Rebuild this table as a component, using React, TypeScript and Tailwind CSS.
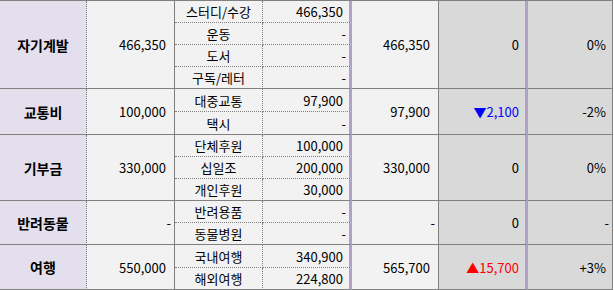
import React from 'react';

type Sub = { name: string; amount: string };
type Group = {
  category: string;
  budget: string;
  items: Sub[];
  spent: string;
  diff: string;
  diffType?: 'up' | 'down';
  rate: string;
};

const groups: Group[] = [
  {
    category: '자기계발',
    budget: '466,350',
    items: [
      { name: '스터디/수강', amount: '466,350' },
      { name: '운동', amount: '-' },
      { name: '도서', amount: '-' },
      { name: '구독/레터', amount: '-' },
    ],
    spent: '466,350',
    diff: '0',
    rate: '0%',
  },
  {
    category: '교통비',
    budget: '100,000',
    items: [
      { name: '대중교통', amount: '97,900' },
      { name: '택시', amount: '-' },
    ],
    spent: '97,900',
    diff: '2,100',
    diffType: 'down',
    rate: '-2%',
  },
  {
    category: '기부금',
    budget: '330,000',
    items: [
      { name: '단체후원', amount: '100,000' },
      { name: '십일조', amount: '200,000' },
      { name: '개인후원', amount: '30,000' },
    ],
    spent: '330,000',
    diff: '0',
    rate: '0%',
  },
  {
    category: '반려동물',
    budget: '-',
    items: [
      { name: '반려용품', amount: '-' },
      { name: '동물병원', amount: '-' },
    ],
    spent: '-',
    diff: '0',
    rate: '-',
  },
  {
    category: '여행',
    budget: '550,000',
    items: [
      { name: '국내여행', amount: '340,900' },
      { name: '해외여행', amount: '224,800' },
    ],
    spent: '565,700',
    diff: '15,700',
    diffType: 'up',
    rate: '+3%',
  },
];

// row spans for each group, used to place spanning cells
const spanClass: Record<number, string> = {
  2: 'row-span-2',
  3: 'row-span-3',
  4: 'row-span-4',
};

function Num({ value, pad }: { value: string; pad: 'wide' | 'narrow' }) {
  const isDash = value === '-';
  const pr = isDash ? 'pr-[3px]' : pad === 'wide' ? 'pr-[8px]' : 'pr-[6px]';
  return <span className={pr}>{value}</span>;
}

export default function App() {
  return (
    <div
      className="w-[614px] h-[290px] bg-white overflow-hidden text-[13px] text-black leading-none"
      style={{ fontFamily: '"Noto Sans CJK KR", "Noto Sans", sans-serif' }}
    >
      <div className="grid grid-cols-[87px_88px_88px_89px_87px_89px_85px] grid-rows-[22px_22px_22px_22px_23px_23px_22px_22px_22px_22px_22px_23px_22px] border-t border-[#808080] w-[613px]">
        {groups.map((g) => {
          const span = spanClass[g.items.length];
          return (
            <React.Fragment key={g.category}>
              <div
                className={`${span} bg-[#e4dfec] border-r border-r-[#808080] border-b border-b-[#808080] flex items-center justify-center font-bold text-[14px]`}
                style={{ borderRightStyle: 'dotted', borderBottomStyle: 'solid' }}
              >
                {g.category}
              </div>
              <div
                className={`${span} bg-[#f2f2f2] border-r border-b border-[#808080] flex items-center justify-end`}
              >
                <Num value={g.budget} pad="wide" />
              </div>
              <div className={`${span} col-span-2 grid grid-rows-subgrid grid-cols-[88px_89px]`}>
                {g.items.map((it, i) => {
                  const last = i === g.items.length - 1;
                  const bottom = last ? 'solid' : 'dotted';
                  return (
                    <React.Fragment key={it.name}>
                      <div
                        className="bg-[#f2f2f2] border-r border-r-[#808080] border-b border-b-[#808080] flex items-center justify-center"
                        style={{ borderRightStyle: 'dotted', borderBottomStyle: bottom }}
                      >
                        {it.name}
                      </div>
                      <div
                        className="bg-[#f2f2f2] border-r-[3px] border-r-[#b1a0c7] border-b border-b-[#808080] flex items-center justify-end"
                        style={{ borderRightStyle: 'solid', borderBottomStyle: bottom }}
                      >
                        <Num value={it.amount} pad="narrow" />
                      </div>
                    </React.Fragment>
                  );
                })}
              </div>
              <div
                className={`${span} bg-[#f2f2f2] border-r border-b border-[#808080] flex items-center justify-end`}
              >
                <Num value={g.spent} pad="wide" />
              </div>
              <div
                className={`${span} bg-[#d9d9d9] border-r-[3px] border-r-[#b1a0c7] border-b border-b-[#808080] flex items-center justify-end`}
              >
                <span
                  className={`pr-[6px] ${
                    g.diffType === 'down' ? 'text-[#0000ff]' : g.diffType === 'up' ? 'text-[#ff0000]' : ''
                  }`}
                >
                  {g.diffType === 'down' ? '▼' : g.diffType === 'up' ? '▲' : ''}
                  {g.diff}
                </span>
              </div>
              <div
                className={`${span} bg-[#d9d9d9] border-r border-b border-[#808080] flex items-center justify-end`}
              >
                <Num value={g.rate} pad="narrow" />
              </div>
            </React.Fragment>
          );
        })}
      </div>
    </div>
  );
}
